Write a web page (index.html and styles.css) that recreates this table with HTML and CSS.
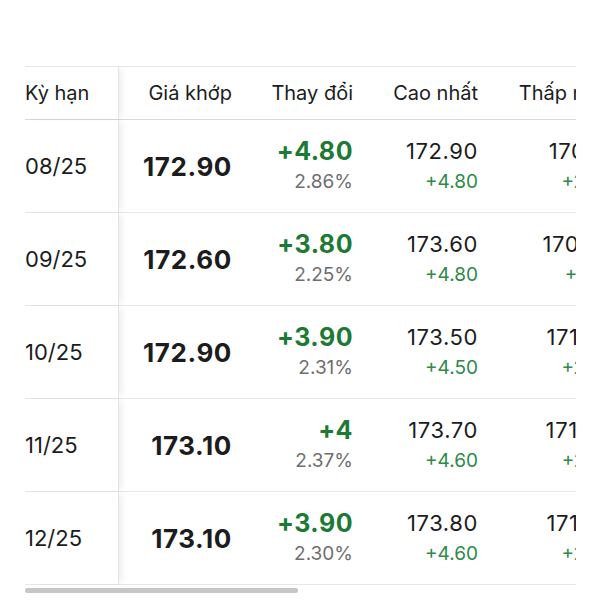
FILE: index.html
```html
<!DOCTYPE html>
<html lang="vi">
<head>
<meta charset="utf-8">
<link rel="stylesheet" href="styles.css">
</head>
<body>
<div class="wrap">
  <div class="table">
    <div class="row head">
      <div class="cell first">Kỳ hạn</div>
      <div class="cell num">Giá khớp</div>
      <div class="cell num">Thay đổi</div>
      <div class="cell num">Cao nhất</div>
      <div class="cell num">Thấp nhất</div>
    </div>
    <div class="row">
      <div class="cell first term">08/25</div>
      <div class="cell num price">172.90</div>
      <div class="cell num stack"><span class="chg">+4.80</span><span class="pct">2.86%</span></div>
      <div class="cell num stack"><span class="val">172.90</span><span class="sub">+4.80</span></div>
      <div class="cell num stack"><span class="val">170.10</span><span class="sub">+2.00</span></div>
    </div>
    <div class="row">
      <div class="cell first term">09/25</div>
      <div class="cell num price">172.60</div>
      <div class="cell num stack"><span class="chg">+3.80</span><span class="pct">2.25%</span></div>
      <div class="cell num stack"><span class="val">173.60</span><span class="sub">+4.80</span></div>
      <div class="cell num stack"><span class="val">170.00</span><span class="sub">+1.20</span></div>
    </div>
    <div class="row">
      <div class="cell first term">10/25</div>
      <div class="cell num price">172.90</div>
      <div class="cell num stack"><span class="chg">+3.90</span><span class="pct">2.31%</span></div>
      <div class="cell num stack"><span class="val">173.50</span><span class="sub">+4.50</span></div>
      <div class="cell num stack"><span class="val">171.00</span><span class="sub">+2.00</span></div>
    </div>
    <div class="row">
      <div class="cell first term">11/25</div>
      <div class="cell num price">173.10</div>
      <div class="cell num stack"><span class="chg">+4</span><span class="pct">2.37%</span></div>
      <div class="cell num stack"><span class="val">173.70</span><span class="sub">+4.60</span></div>
      <div class="cell num stack"><span class="val">171.40</span><span class="sub">+2.30</span></div>
    </div>
    <div class="row">
      <div class="cell first term">12/25</div>
      <div class="cell num price">173.10</div>
      <div class="cell num stack"><span class="chg">+3.90</span><span class="pct">2.30%</span></div>
      <div class="cell num stack"><span class="val">173.80</span><span class="sub">+4.60</span></div>
      <div class="cell num stack"><span class="val">171.00</span><span class="sub">+2.00</span></div>
    </div>
  </div>
  <div class="scrollbar"></div>
</div>
</body>
</html>
```
FILE: styles.css
```css
html, body {
  margin: 0;
  padding: 0;
  background: #ffffff;
}
body {
  font-family: Inter, "Noto Sans", "DejaVu Sans", sans-serif;
  color: #1c1c1e;
}
.wrap {
  padding: 66px 0 0 25px;
  width: 551px;
}
.table {
  width: 551px;
  overflow: hidden;
  border-top: 1px solid #e6e6e6;
}
.row {
  display: grid;
  grid-template-columns: 94px 113px 121px 125px 136px;
  height: 93px;
  box-sizing: border-box;
  border-bottom: 1px solid #e6e6e6;
}
.row.head {
  height: 53px;
  border-bottom: 1px solid #d9d9d9;
  font-size: 20px;
  color: #1c1c1e;
}
.cell {
  display: flex;
  flex-direction: column;
  justify-content: center;
  white-space: nowrap;
}
.cell.num {
  align-items: flex-end;
}
.cell.first {
  align-items: flex-start;
  border-right: 1px solid #e4e4e4;
  box-shadow: 5px 0 6px -2px rgba(0, 0, 0, 0.07);
  position: relative;
  z-index: 1;
}
.term {
  font-size: 22px;
}
.price {
  font-size: 26px;
  font-weight: 700;
  letter-spacing: 0.6px;
  color: #1c1c1e;
}
.chg {
  font-size: 25px;
  font-weight: 700;
  letter-spacing: 0.5px;
  color: #1d7a35;
  line-height: 32px;
}
.pct {
  font-size: 19px;
  color: #6e6e70;
  line-height: 30px;
}
.val {
  font-size: 22px;
  letter-spacing: 0.6px;
  color: #1c1c1e;
  line-height: 32px;
}
.sub {
  font-size: 19px;
  color: #2d8a47;
  line-height: 30px;
}
.scrollbar {
  margin-top: 3px;
  width: 273px;
  height: 5px;
  border-radius: 2px;
  background: #c6c6c6;
}
```
